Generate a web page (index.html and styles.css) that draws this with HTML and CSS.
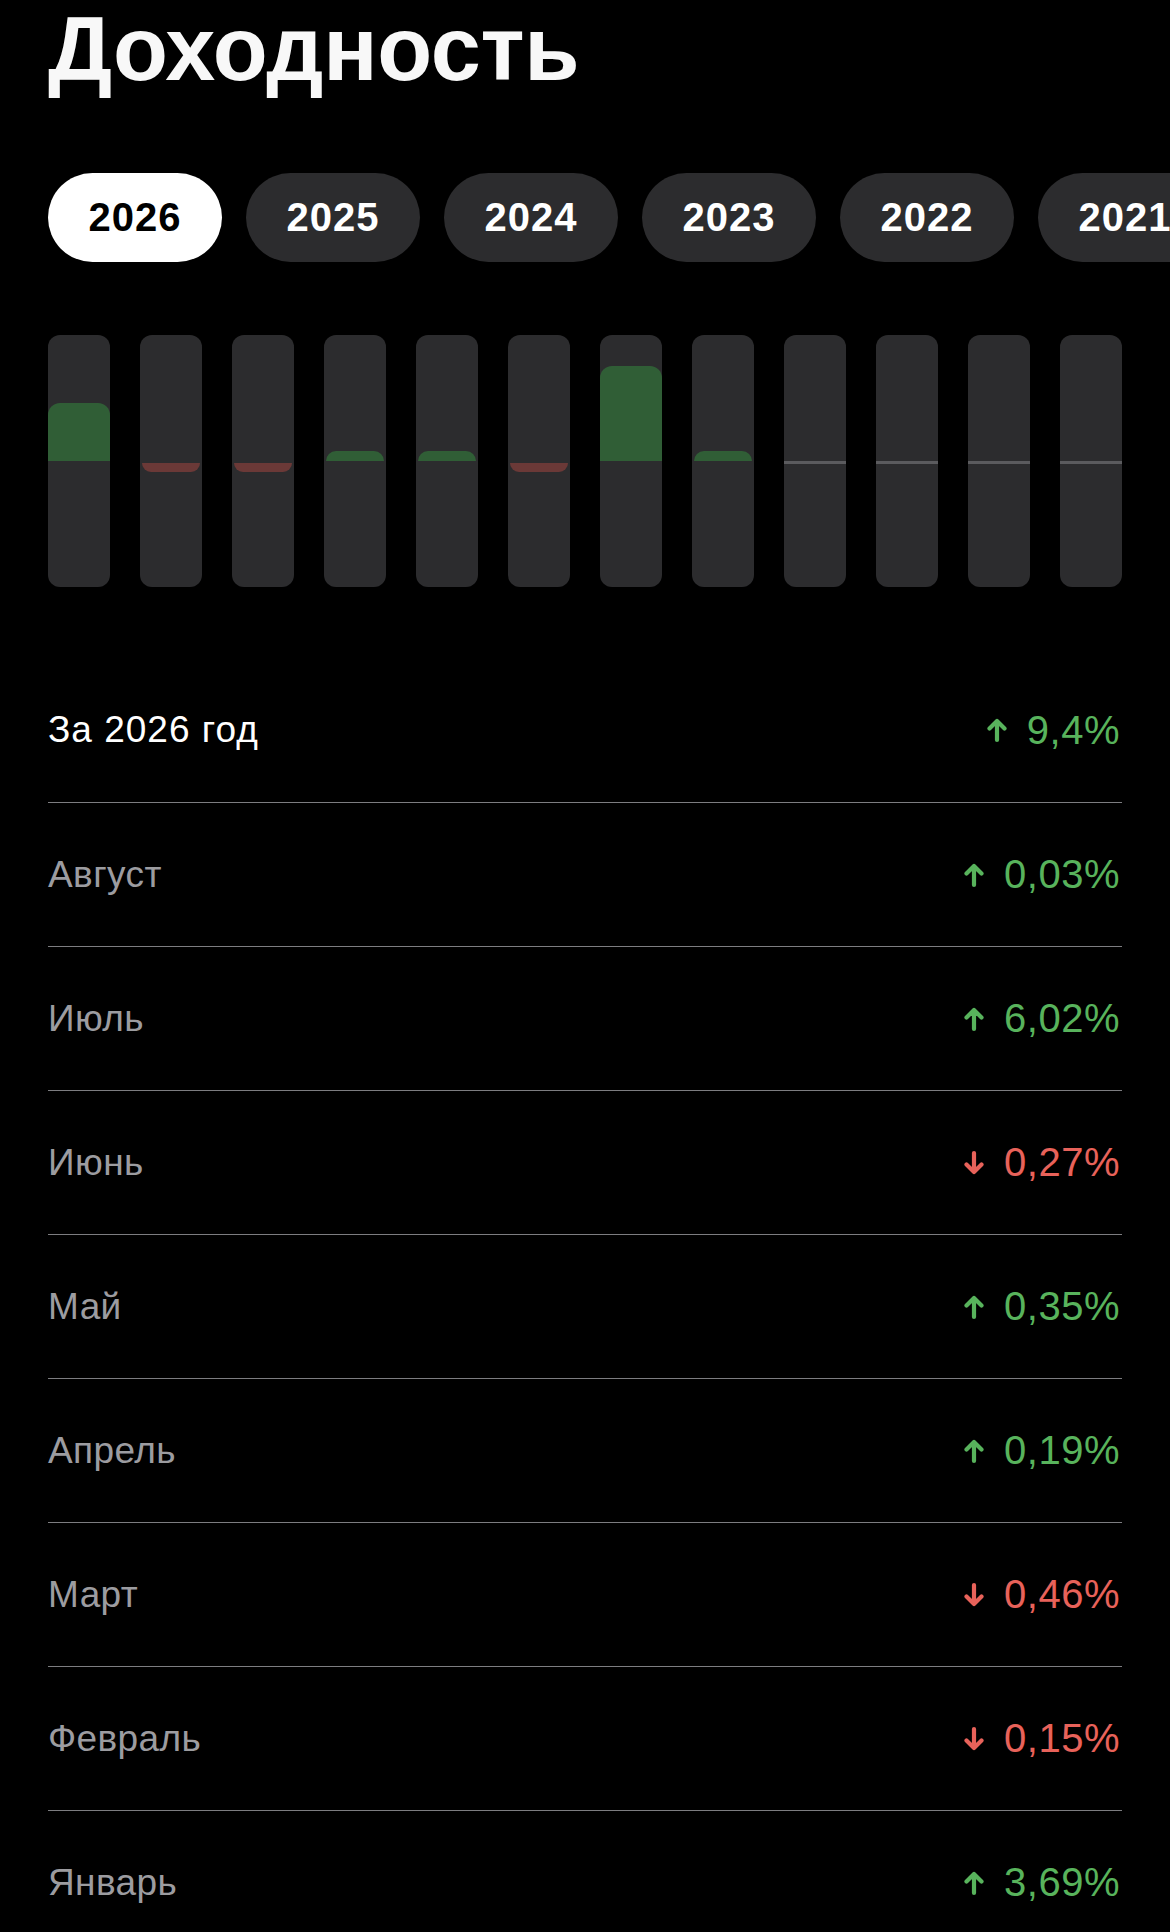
FILE: index.html
```html
<!DOCTYPE html>
<html lang="ru">
<head>
<meta charset="UTF-8">
<meta name="viewport" content="width=device-width, initial-scale=1.0">
<title>Доходность</title>
<link rel="stylesheet" href="styles.css">
</head>
<body>

<div class="page">
    <h1>Доходность</h1>

    <div class="years">
        <div class="year active">2026</div>
        <div class="year">2025</div>
        <div class="year">2024</div>
        <div class="year">2023</div>
        <div class="year">2022</div>
        <div class="year">2021</div>
    </div>

    <div class="chart">
        <div class="bar"><div class="half top"><div class="fill up" style="height: 58px"></div></div><div class="half bottom"></div></div>
        <div class="bar"><div class="half top"></div><div class="half bottom"><div class="fill down small" style="height: 9px"></div></div></div>
        <div class="bar"><div class="half top"></div><div class="half bottom"><div class="fill down small" style="height: 9px"></div></div></div>
        <div class="bar"><div class="half top"><div class="fill up small" style="height: 10px"></div></div><div class="half bottom"></div></div>
        <div class="bar"><div class="half top"><div class="fill up small" style="height: 10px"></div></div><div class="half bottom"></div></div>
        <div class="bar"><div class="half top"></div><div class="half bottom"><div class="fill down small" style="height: 9px"></div></div></div>
        <div class="bar"><div class="half top"><div class="fill up" style="height: 95px"></div></div><div class="half bottom"></div></div>
        <div class="bar"><div class="half top"><div class="fill up small" style="height: 10px"></div></div><div class="half bottom"></div></div>
        <div class="bar"><div class="half top"></div><div class="half bottom"><div class="fill empty"></div></div></div>
        <div class="bar"><div class="half top"></div><div class="half bottom"><div class="fill empty"></div></div></div>
        <div class="bar"><div class="half top"></div><div class="half bottom"><div class="fill empty"></div></div></div>
        <div class="bar"><div class="half top"></div><div class="half bottom"><div class="fill empty"></div></div></div>
    </div>

    <div class="list">
        <div class="row total">
            <span class="label">За 2026 год</span>
            <span class="value pos"><svg class="arrow" viewBox="0 0 20 26"><path d="M10 23V4M2.5 11.5L10 4l7.5 7.5"/></svg>9,4%</span>
        </div>
        <div class="row">
            <span class="label">Август</span>
            <span class="value pos"><svg class="arrow" viewBox="0 0 20 26"><path d="M10 23V4M2.5 11.5L10 4l7.5 7.5"/></svg>0,03%</span>
        </div>
        <div class="row">
            <span class="label">Июль</span>
            <span class="value pos"><svg class="arrow" viewBox="0 0 20 26"><path d="M10 23V4M2.5 11.5L10 4l7.5 7.5"/></svg>6,02%</span>
        </div>
        <div class="row">
            <span class="label">Июнь</span>
            <span class="value neg"><svg class="arrow" viewBox="0 0 20 26"><path d="M10 3v19M2.5 14.5L10 22l7.5-7.5"/></svg>0,27%</span>
        </div>
        <div class="row">
            <span class="label">Май</span>
            <span class="value pos"><svg class="arrow" viewBox="0 0 20 26"><path d="M10 23V4M2.5 11.5L10 4l7.5 7.5"/></svg>0,35%</span>
        </div>
        <div class="row">
            <span class="label">Апрель</span>
            <span class="value pos"><svg class="arrow" viewBox="0 0 20 26"><path d="M10 23V4M2.5 11.5L10 4l7.5 7.5"/></svg>0,19%</span>
        </div>
        <div class="row">
            <span class="label">Март</span>
            <span class="value neg"><svg class="arrow" viewBox="0 0 20 26"><path d="M10 3v19M2.5 14.5L10 22l7.5-7.5"/></svg>0,46%</span>
        </div>
        <div class="row">
            <span class="label">Февраль</span>
            <span class="value neg"><svg class="arrow" viewBox="0 0 20 26"><path d="M10 3v19M2.5 14.5L10 22l7.5-7.5"/></svg>0,15%</span>
        </div>
        <div class="row">
            <span class="label">Январь</span>
            <span class="value pos"><svg class="arrow" viewBox="0 0 20 26"><path d="M10 23V4M2.5 11.5L10 4l7.5 7.5"/></svg>3,69%</span>
        </div>
    </div>
</div>

</body>
</html>
```

FILE: styles.css
```css
body {
    margin: 0;
    padding: 0;
    background-color: #000;
    color: #fff;
    font-family: "Liberation Sans", Arial, sans-serif;
    overflow: hidden;
}

.page {
    padding: 0 48px;
}

h1 {
    margin: 0;
    padding-top: 4px;
    font-size: 90px;
    line-height: 90px;
    font-weight: 700;
    letter-spacing: -0.3px;
    color: #f8f8f8;
}

.years {
    display: flex;
    gap: 24px;
    margin-top: 79px;
    margin-right: -48px;
    overflow: hidden;
}

.year {
    flex-shrink: 0;
    width: 174px;
    height: 89px;
    border-radius: 45px;
    background-color: #2c2c2e;
    color: #fff;
    font-size: 40px;
    font-weight: 700;
    letter-spacing: 1px;
    display: flex;
    align-items: center;
    justify-content: center;
}

.year.active {
    background-color: #fff;
    color: #000;
}

.chart {
    display: flex;
    justify-content: space-between;
    margin-top: 73px;
}

.bar {
    width: 62px;
    height: 252px;
    border-radius: 12px;
    background-color: #2c2c2e;
    display: flex;
    flex-direction: column;
    overflow: hidden;
}

.half {
    flex: 1;
    display: flex;
    flex-direction: column;
}

.half.top {
    justify-content: flex-end;
}

.fill.up {
    background-color: #305e36;
    border-radius: 12px 12px 0 0;
}

.fill.down {
    background-color: #6b3937;
    border-radius: 0 0 12px 12px;
    margin-top: 2px;
}

.fill.small {
    margin-left: 2px;
    margin-right: 2px;
}

.fill.empty {
    height: 3px;
    background-color: #5b5b5e;
}

.list {
    margin-top: 71px;
}

.row {
    box-sizing: border-box;
    height: 144px;
    display: flex;
    justify-content: space-between;
    align-items: center;
    border-top: 1px solid #7d7d80;
}

.row.total {
    border-top: none;
}

.label {
    font-size: 37px;
    letter-spacing: 0.4px;
    color: #9c9ca0;
}

.row.total .label {
    color: #fff;
    letter-spacing: 1px;
}

.value {
    display: flex;
    align-items: center;
    gap: 20px;
    font-size: 40px;
    letter-spacing: 0.5px;
    margin-right: 2px;
}

.value.pos {
    color: #58b35c;
}

.value.neg {
    color: #e8625a;
}

.arrow {
    width: 20px;
    height: 26px;
    fill: none;
    stroke: currentColor;
    stroke-width: 4.2;
    stroke-linecap: round;
    stroke-linejoin: round;
}
```
